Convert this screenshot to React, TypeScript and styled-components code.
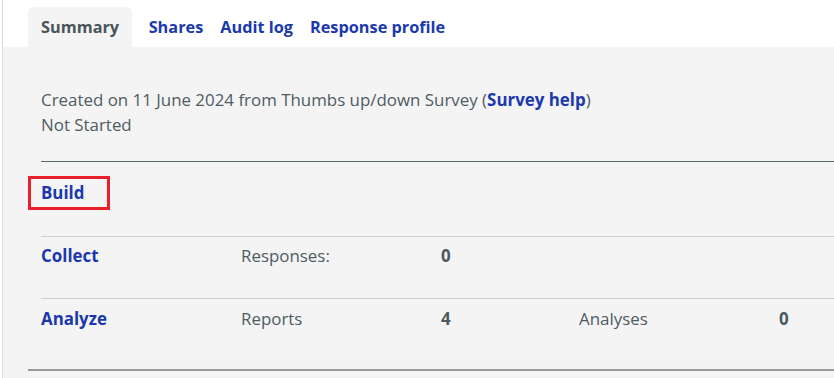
import React from "react";
import styled, { createGlobalStyle } from "styled-components";

const Global = createGlobalStyle`
  html, body { margin: 0; padding: 0; background: #ffffff; }
  body { font-family: "Open Sans", "Noto Sans", Arial, sans-serif; }
`;

const Page = styled.div`
  margin-left: 2px;
  border-left: 1px solid #dcdcdc;
  min-height: 378px;
  display: flex;
  flex-direction: column;
`;

const TabBar = styled.nav`
  height: 47px;
  display: flex;
  align-items: flex-end;
  padding-left: 25px;
  background: #ffffff;
`;

const Tab = styled.a<{ $active?: boolean }>`
  height: 40px;
  display: flex;
  align-items: center;
  padding: 0 ${(p) => (p.$active ? "13px" : "8.5px")};
  margin-right: ${(p) => (p.$active ? "8px" : "0")};
  background: ${(p) => (p.$active ? "#f4f4f4" : "transparent")};
  border-radius: 6px 6px 0 0;
  font-size: 16.3px;
  font-weight: 700;
  color: ${(p) => (p.$active ? "#4a5559" : "#1b39ad")};
  text-decoration: none;
  cursor: pointer;
`;

const Content = styled.main`
  flex: 1;
  background: #f4f4f4;
  padding: 40px 0 0 38px;
  color: #4f5c62;
  font-size: 16.9px;
  line-height: 25px;
`;

const Info = styled.p`
  margin: 0 0 24px;
`;

const Link = styled.a`
  color: #1b39ad;
  font-weight: 700;
  text-decoration: none;
`;

const Table = styled.div`
  display: flex;
  flex-direction: column;
`;

const Row = styled.div<{ $height: number; $pad: number; $strong?: boolean }>`
  display: grid;
  grid-template-columns: 200px 200px 138px 200px 1fr;
  align-items: start;
  height: ${(p) => p.$height}px;
  box-sizing: border-box;
  padding-top: ${(p) => p.$pad}px;
  border-top: 1px solid ${(p) => (p.$strong ? "#56666b" : "#cfcfcf")};
`;

const Highlight = styled.span`
  display: inline-block;
  margin-left: -13px;
  padding: 4px 23px 4px 10px;
  border: 3px solid #e8202a;
  line-height: 20px;
  justify-self: start;
`;

const Label = styled.span``;

const Value = styled.span`
  font-weight: 700;
  color: #4a5a60;
`;

const EndRule = styled.hr`
  margin: 0 0 0 -13px;
  border: 0;
  border-top: 2px solid #9a9a9a;
  height: 0;
`;

export default function App() {
  return (
    <>
      <Global />
      <Page>
        <TabBar>
          <Tab $active>Summary</Tab>
          <Tab>Shares</Tab>
          <Tab>Audit log</Tab>
          <Tab>Response profile</Tab>
        </TabBar>
        <Content>
          <Info>
            Created on 11 June 2024 from Thumbs up/down Survey (
            <Link>Survey help</Link>)
            <br />
            Not Started
          </Info>
          <Table>
            <Row $height={75} $pad={14} $strong>
              <Highlight>
                <Link>Build</Link>
              </Highlight>
            </Row>
            <Row $height={62} $pad={6}>
              <Link>Collect</Link>
              <Label>Responses:</Label>
              <Value>0</Value>
            </Row>
            <Row $height={71} $pad={7}>
              <Link>Analyze</Link>
              <Label>Reports</Label>
              <Value>4</Value>
              <Label>Analyses</Label>
              <Value>0</Value>
            </Row>
            <EndRule />
          </Table>
        </Content>
      </Page>
    </>
  );
}
